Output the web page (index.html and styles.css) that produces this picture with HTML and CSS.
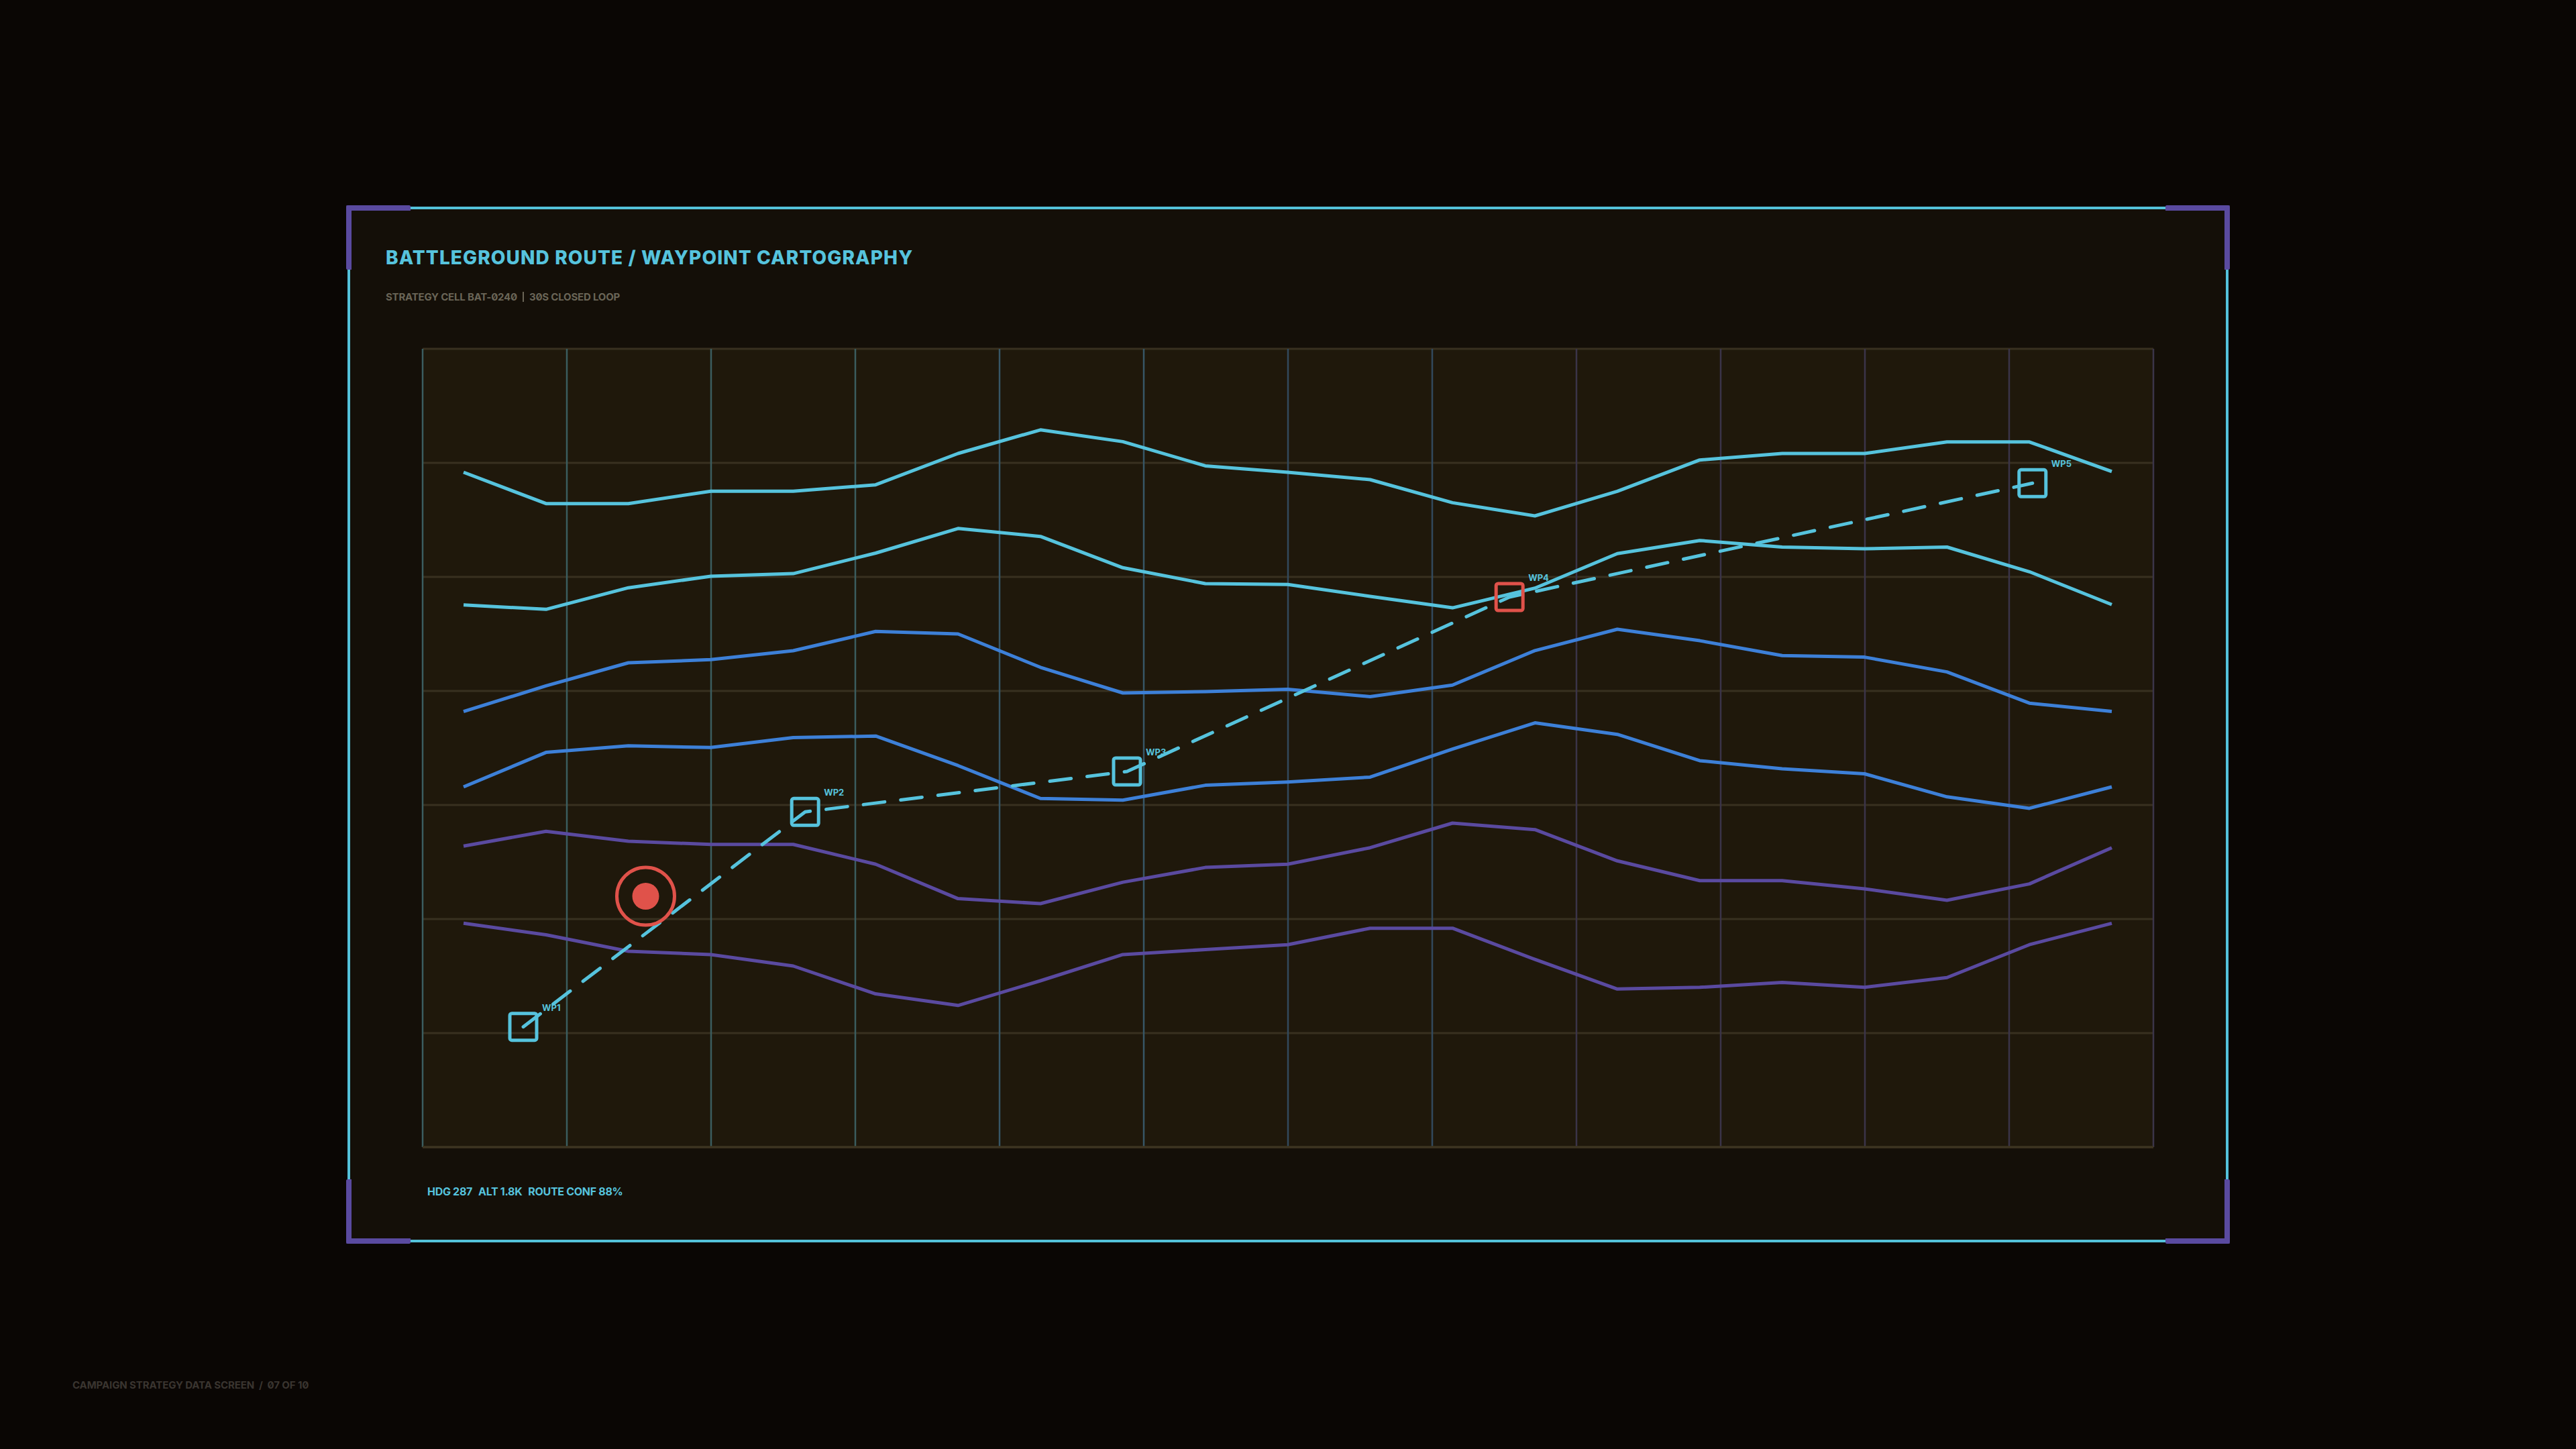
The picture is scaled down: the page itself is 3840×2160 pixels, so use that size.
FILE: index.html
```html
<!DOCTYPE html>
<html lang="en">
<head>
<meta charset="utf-8">
<title>Battleground Route / Waypoint Cartography</title>
<link rel="stylesheet" href="styles.css">
</head>
<body>
<main class="screen">
  <section class="panel">
    <span class="corner tl"></span>
    <span class="corner tr"></span>
    <span class="corner bl"></span>
    <span class="corner br"></span>
    <header class="panel-head">
      <h1 class="title">BATTLEGROUND ROUTE / WAYPOINT CARTOGRAPHY</h1>
      <p class="subtitle"><span>STRATEGY CELL BAT-0240</span><span class="sep"></span><span>30S CLOSED LOOP</span></p>
    </header>
    <div class="chart-wrap">
      <svg class="chart" width="2584" height="1194" viewBox="-2 -2 2584 1194" xmlns="http://www.w3.org/2000/svg">
        <rect class="plot-bg" x="0" y="0" width="2580" height="1190"/>
        <g class="hgrid">
          <line x1="0" y1="0" x2="2580" y2="0"/>
          <line x1="0" y1="170" x2="2580" y2="170"/>
          <line x1="0" y1="340" x2="2580" y2="340"/>
          <line x1="0" y1="510" x2="2580" y2="510"/>
          <line x1="0" y1="680" x2="2580" y2="680"/>
          <line x1="0" y1="850" x2="2580" y2="850"/>
          <line x1="0" y1="1020" x2="2580" y2="1020"/>
        </g>
        <g class="vgrid">
          <line class="vg-a" x1="0" y1="0" x2="0" y2="1190"/>
          <line class="vg-a" x1="215" y1="0" x2="215" y2="1190"/>
          <line class="vg-a" x1="430" y1="0" x2="430" y2="1190"/>
          <line class="vg-a" x1="645" y1="0" x2="645" y2="1190"/>
          <line class="vg-b" x1="860" y1="0" x2="860" y2="1190"/>
          <line class="vg-b" x1="1075" y1="0" x2="1075" y2="1190"/>
          <line class="vg-c" x1="1290" y1="0" x2="1290" y2="1190"/>
          <line class="vg-c" x1="1505" y1="0" x2="1505" y2="1190"/>
          <line class="vg-d" x1="1720" y1="0" x2="1720" y2="1190"/>
          <line class="vg-d" x1="1935" y1="0" x2="1935" y2="1190"/>
          <line class="vg-d" x1="2150" y1="0" x2="2150" y2="1190"/>
          <line class="vg-d" x1="2365" y1="0" x2="2365" y2="1190"/>
          <line class="vg-d" x1="2580" y1="0" x2="2580" y2="1190"/>
        </g>
        <line class="base" x1="0" y1="1190" x2="2580" y2="1190"/>
        <g class="series">
          <polyline class="s-cyan" points="61,184 183.9,230.7 306.7,230.7 429.6,212.3 552.4,212.3 675.3,202.7 798.1,156 921,120.8 1043.8,138.4 1166.7,174.4 1289.5,184 1412.4,195 1535.2,229.4 1658.1,249 1780.9,212.3 1903.8,165.7 2026.6,156 2149.5,156 2272.3,138.8 2395.2,138.8 2518,182.9"/>
          <polyline class="s-cyan" points="61,381.8 183.9,388.3 306.7,356.2 429.6,339 552.4,335.1 675.3,304.5 798.1,267.8 921,279.7 1043.8,326.3 1166.7,350 1289.5,351.2 1412.4,369 1535.2,386.1 1658.1,356.7 1780.9,305.3 1903.8,285.7 2026.6,295.5 2149.5,298 2272.3,295.5 2395.2,332.3 2518,381.2"/>
          <polyline class="s-blue" points="61,540.6 183.9,502.4 306.7,468 429.6,463.3 552.4,450 675.3,421.3 798.1,425 921,474.8 1043.8,513 1166.7,511 1289.5,507.4 1412.4,518.4 1535.2,501.2 1658.1,449.8 1780.9,418 1903.8,435.1 2026.6,457.2 2149.5,459.6 2272.3,481.6 2395.2,528.2 2518,540.4"/>
          <polyline class="s-blue" points="61,653 183.9,601.6 306.7,591.8 429.6,594.3 552.4,579.6 675.3,577.2 798.1,621.2 921,670.2 1043.8,672.7 1166.7,650.6 1289.5,645.7 1412.4,638.4 1535.2,596.7 1658.1,557.6 1780.9,574.7 1903.8,613.9 2026.6,626.1 2149.5,633.5 2272.3,667.8 2395.2,684.9 2518,653"/>
          <polyline class="s-violet" points="61,741.2 183.9,719.2 306.7,733.9 429.6,738.8 552.4,738.8 675.3,768.2 798.1,819.6 921,827 1043.8,795.1 1166.7,773.1 1289.5,768.2 1412.4,743.7 1535.2,707 1658.1,716.7 1780.9,763.3 1903.8,792.7 2026.6,792.7 2149.5,804.9 2272.3,822 2395.2,797.6 2518,743.7"/>
          <polyline class="s-violet" points="61,856.3 183.9,873.5 306.7,898 429.6,902.9 552.4,920 675.3,961.6 798.1,978.8 921,942 1043.8,902.9 1166.7,895.5 1289.5,888.2 1412.4,863.7 1535.2,863.7 1658.1,910.2 1780.9,954.3 1903.8,951.8 2026.6,944.5 2149.5,951.8 2272.3,937.2 2395.2,888.2 2518,856.3"/>
        </g>
        <polyline class="route" points="150,1010.7 570.2,690.3 1050,630 1620.2,370 2399.8,200.3"/>
        <g class="threat">
          <circle class="threat-ring" cx="332.5" cy="816" r="43"/>
          <circle class="threat-core" cx="332.5" cy="816" r="20"/>
        </g>
        <g class="waypoints">
          <rect class="wp" x="130" y="990.7" width="40" height="40" rx="3"/>
          <text class="wp-label" x="178" y="986.7">WP1</text>
          <rect class="wp" x="550.2" y="670.3" width="40" height="40" rx="3"/>
          <text class="wp-label" x="598.2" y="666.3">WP2</text>
          <rect class="wp" x="1030" y="610" width="40" height="40" rx="3"/>
          <text class="wp-label" x="1078" y="606">WP3</text>
          <rect class="wp wp-alert" x="1600.2" y="350" width="40" height="40" rx="3"/>
          <text class="wp-label" x="1648.2" y="346">WP4</text>
          <rect class="wp" x="2379.8" y="180.3" width="40" height="40" rx="3"/>
          <text class="wp-label" x="2427.8" y="176.3">WP5</text>
        </g>
      </svg>
      <div class="status"><span>HDG 287</span><span>ALT 1.8K</span><span>ROUTE CONF 88%</span></div>
    </div>
  </section>
  <footer class="page-foot">CAMPAIGN STRATEGY DATA SCREEN  /  07 OF 10</footer>
</main>
</body>
</html>
```
FILE: styles.css
```css
* { box-sizing: border-box; }

html, body {
  margin: 0;
  padding: 0;
  background: #0a0604;
}

body {
  font-family: Inter, "Liberation Sans", sans-serif;
  font-feature-settings: "zero" 1;
  color: #56c3dd;
}

.screen {
  width: 3840px;
  height: 2160px;
  padding-top: 308px;
  display: flex;
  flex-direction: column;
  overflow: hidden;
}

.panel {
  position: relative;
  align-self: center;
  width: 2804px;
  height: 1544px;
  border: 4px solid #53c1da;
  background: #140f08;
  padding-top: 58px;
  display: flex;
  flex-direction: column;
}

.corner {
  position: absolute;
  width: 96px;
  height: 96px;
  border: 0 solid #5a4aa0;
  border-radius: 2px;
}
.corner.tl { top: -6px; left: -6px; border-top-width: 8px; border-left-width: 8px; }
.corner.tr { top: -6px; right: -6px; border-top-width: 8px; border-right-width: 8px; }
.corner.bl { bottom: -6px; left: -6px; border-bottom-width: 8px; border-left-width: 8px; }
.corner.br { bottom: -6px; right: -6px; border-bottom-width: 8px; border-right-width: 8px; }

.panel-head {
  padding: 0 53px;
}

.title {
  margin: 0;
  font-size: 28px;
  line-height: 28px;
  font-weight: 800;
  letter-spacing: 1.1px;
  color: #56c3dd;
}

.subtitle {
  margin: 37px 0 0;
  height: 15px;
  display: flex;
  align-items: center;
  font-size: 15px;
  line-height: 15px;
  font-weight: 700;
  letter-spacing: -0.2px;
  color: #6a6557;
}

.subtitle .sep {
  flex: none;
  width: 2px;
  height: 15px;
  margin: 0 8px;
  background: #6a6557;
}

.chart-wrap {
  width: 2584px;
  margin: 68px auto 0;
}

.chart {
  display: block;
}

.plot-bg { fill: #1f180b; }

.hgrid line {
  stroke: #383020;
  stroke-width: 3;
}

.vgrid line { stroke-width: 2.5; }
.vg-a { stroke: #3b5d5f; }
.vg-b { stroke: #375666; }
.vg-c { stroke: #32495d; }
.vg-d { stroke: #3b3449; }

.base {
  stroke: #3d3421;
  stroke-width: 3.5;
}

.series polyline {
  fill: none;
  stroke-width: 5;
  stroke-linejoin: round;
  stroke-linecap: butt;
}
.s-cyan { stroke: #56c3dd; }
.s-blue { stroke: #3d80d8; }
.s-violet { stroke: #5a4aa0; }

.route {
  fill: none;
  stroke: #56c3dd;
  stroke-width: 5;
  stroke-dasharray: 32 24;
  stroke-linecap: round;
  stroke-linejoin: round;
}

.threat-ring {
  fill: none;
  stroke: #e0524a;
  stroke-width: 5;
}
.threat-core { fill: #e0524a; }

.wp {
  fill: none;
  stroke: #56c3dd;
  stroke-width: 5;
}
.wp-alert { stroke: #e0524a; }

.wp-label {
  font-family: Inter, "Liberation Sans", sans-serif;
  font-size: 13px;
  font-weight: 700;
  fill: #56c3dd;
}

.status {
  margin-top: 56px;
  padding-left: 9px;
  display: flex;
  gap: 9px;
  font-size: 16px;
  line-height: 16px;
  font-weight: 700;
  letter-spacing: -0.3px;
  color: #56c3dd;
}

.page-foot {
  margin-top: 205px;
  padding-left: 108px;
  font-size: 15px;
  line-height: 15px;
  font-weight: 700;
  letter-spacing: -0.1px;
  white-space: pre;
  color: #3a3530;
}
```
